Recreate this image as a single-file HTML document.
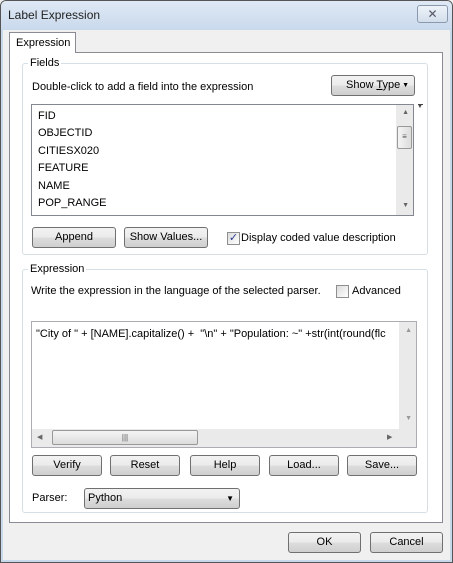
<!DOCTYPE html>
<html><head><style>
*{box-sizing:border-box;margin:0;padding:0}
body{width:453px;height:563px;overflow:hidden;font-family:"Liberation Sans",sans-serif;font-size:11px;color:#000;background:#f0f0f0;position:relative}
.a{position:absolute}
.win{left:0;top:0;width:453px;height:563px;border:1px solid #555;border-radius:6px 6px 0 0;background:#f0f0f0}
.title{left:1px;top:1px;width:451px;height:29px;background:linear-gradient(#dfe9f5,#c9d9ec);border-radius:5px 5px 0 0}
.sideL{left:1px;top:30px;width:2px;height:532px;background:#c9d9ec}
.sideR{right:1px;top:30px;width:2px;height:532px;background:#c9d9ec}
.btm{left:1px;bottom:1px;width:451px;height:2px;background:#c9d9ec}
.btn{border:1px solid #707070;border-radius:3px;background:linear-gradient(#f2f2f2 0,#ebebeb 50%,#dddddd 51%,#cfcfcf 100%);text-align:center;line-height:19px;font-size:11px}
.grp{border:1px solid #d5dfe5;border-radius:3px}
.lbl{background:#fff;padding:0 2px}
.cb{width:13px;height:13px;border:1px solid #8e8f8f;background:linear-gradient(135deg,#dcdcdc,#fff)}
</style></head><body>
<div class="a win"></div>
<div class="a title"></div>
<div class="a sideL"></div><div class="a sideR"></div><div class="a btm"></div>
<div class="a" style="left:8px;top:8px;font-size:12px;color:#222">Label Expression</div>
<div class="a" style="left:417px;top:5px;width:31px;height:18px;border:1px solid #8a99ad;border-radius:3px;background:linear-gradient(#eef3f9,#d3deeb);text-align:center;font-size:12px;line-height:16px;color:#556">&#x2715;</div>

<div class="a" style="left:9px;top:52px;width:434px;height:471px;border:1px solid #898c95;background:#fff"></div>
<div class="a" style="left:9px;top:32px;width:67px;height:21px;border:1px solid #898c95;border-bottom:none;background:#fff;padding:4px 0 0 6px;font-size:11px">Expression</div>

<div class="a grp" style="left:22px;top:63px;width:406px;height:192px"></div>
<div class="a lbl" style="left:28px;top:57px;font-size:11px">Fields</div>
<div class="a" style="left:32px;top:81px;font-size:11px">Double-click to add a field into the expression</div>
<div class="a btn" style="left:331px;top:75px;width:84px;height:21px;text-align:left;padding-left:14px">Show <u>T</u>ype<span class="a" style="right:5px;top:0;font-size:7px">&#9660;</span></div>

<div class="a" style="left:31px;top:104px;width:383px;height:112px;border:1px solid #828790;background:#fff;overflow:hidden">
<div style="padding:3px 0 0 6px;line-height:17.4px;font-size:11px">FID<br>OBJECTID<br>CITIESX020<br>FEATURE<br>NAME<br>POP_RANGE<br>POP_2000</div>
<div class="a" style="right:0;top:0;width:17px;height:110px;background:#eaeaea"></div>
<div class="a" style="right:4px;top:4px;font-size:7px;color:#666">&#9650;</div>
<div class="a" style="right:1px;top:21px;width:15px;height:23px;border:1px solid #999;border-radius:2px;background:linear-gradient(90deg,#f4f4f4,#dcdcdc);font-size:8px;text-align:center;line-height:20px;color:#555">&#8801;</div>
<div class="a" style="right:4px;top:97px;font-size:7px;color:#666">&#9660;</div>
</div>
<div class="a" style="left:418px;top:104px;width:5px;height:1px;background:#444"></div>
<div class="a" style="left:417px;top:104px;font-size:6px;color:#444">&#9660;</div>

<div class="a btn" style="left:32px;top:227px;width:84px;height:21px">Append</div>
<div class="a btn" style="left:124px;top:227px;width:84px;height:21px">Show Values...</div>
<div class="a cb" style="left:227px;top:232px;font-size:11px;line-height:11px;text-align:center;color:#2a3b8f">&#10003;</div>
<div class="a" style="left:241px;top:232px;font-size:11px">Display coded value description</div>

<div class="a grp" style="left:22px;top:269px;width:406px;height:244px"></div>
<div class="a lbl" style="left:28px;top:263px;font-size:11px">Expression</div>
<div class="a" style="left:31px;top:285px;font-size:11px">Write the expression in the language of the selected parser.</div>
<div class="a cb" style="left:336px;top:285px"></div>
<div class="a" style="left:352px;top:285px;font-size:11px">Advanced</div>

<div class="a" style="left:31px;top:321px;width:386px;height:127px;border:1px solid #abadb3;background:#fff;overflow:hidden">
<div class="a" style="left:4px;top:6px;white-space:nowrap;font-size:11px">"City of " + [NAME].capitalize() + &nbsp;"\n" + "Population: ~" +str(int(round(flc</div>
<div class="a" style="right:0;top:0;width:17px;height:107px;background:#eaeaea"></div>
<div class="a" style="right:4px;top:5px;font-size:7px;color:#999">&#9650;</div>
<div class="a" style="right:4px;top:93px;font-size:7px;color:#999">&#9660;</div>
<div class="a" style="left:0;top:107px;width:384px;height:18px;background:#eaeaea"></div>
<div class="a" style="left:5px;top:111px;font-size:7px;color:#666">&#9664;</div>
<div class="a" style="left:20px;top:108px;width:146px;height:15px;border:1px solid #999;border-radius:2px;background:linear-gradient(#f4f4f4,#dcdcdc);text-align:center;font-size:8px;line-height:13px;color:#555">|||</div>
<div class="a" style="left:355px;top:111px;font-size:7px;color:#666">&#9654;</div>
</div>

<div class="a btn" style="left:32px;top:455px;width:70px;height:21px">Verify</div>
<div class="a btn" style="left:110px;top:455px;width:70px;height:21px">Reset</div>
<div class="a btn" style="left:190px;top:455px;width:70px;height:21px">Help</div>
<div class="a btn" style="left:269px;top:455px;width:70px;height:21px">Load...</div>
<div class="a btn" style="left:347px;top:455px;width:70px;height:21px">Save...</div>

<div class="a" style="left:32px;top:492px;font-size:11px">Parser:</div>
<div class="a btn" style="left:84px;top:488px;width:156px;height:21px;text-align:left;padding-left:3px;font-size:11px">Python<span class="a" style="right:5px;top:0;font-size:8px">&#9660;</span></div>

<div class="a btn" style="left:288px;top:532px;width:73px;height:21px">OK</div>
<div class="a btn" style="left:370px;top:532px;width:73px;height:21px">Cancel</div>
</body></html>
